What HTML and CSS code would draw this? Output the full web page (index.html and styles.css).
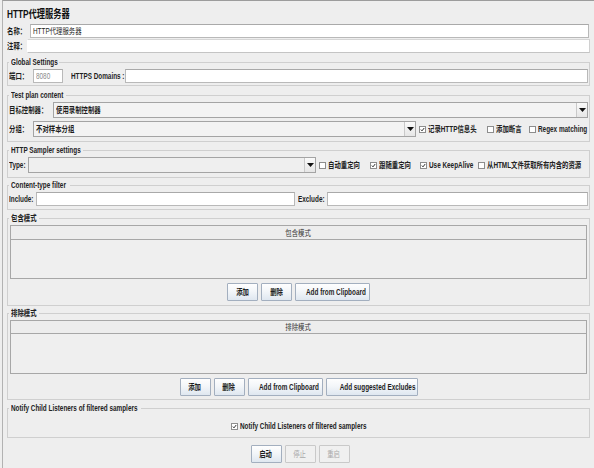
FILE: index.html
```html
<!DOCTYPE html>
<html lang="zh-CN">
<head>
<meta charset="utf-8">
<title>HTTP代理服务器</title>
<link rel="stylesheet" href="styles.css">
</head>
<body>
<div class="frame">
  <div class="title"><span class="t">HTTP代理服务器</span></div>

  <div class="row name-row">
    <span class="lbl lbl-name"><span class="t">名称：</span></span>
    <div class="input"><span class="val t">HTTP代理服务器</span></div>
  </div>
  <div class="row comment-row">
    <span class="lbl lbl-comment"><span class="t">注释：</span></span>
    <div class="input input-flat"></div>
  </div>

  <fieldset class="group g-global">
    <legend class="lg-global"><span class="t">Global Settings</span></legend>
    <div class="grid grid-global">
      <span class="lbl"><span class="t">端口：</span></span>
      <div class="input"><span class="val muted t">8080</span></div>
      <span class="lbl lbl-https"><span class="t">HTTPS Domains :</span></span>
      <div class="input"></div>
    </div>
  </fieldset>

  <fieldset class="group g-plan">
    <legend class="lg-plan"><span class="t">Test plan content</span></legend>
    <div class="grid grid-plan1">
      <span class="lbl"><span class="t">目标控制器：</span></span>
      <div class="combo"><span class="combo-text"><span class="t">使用录制控制器</span></span><span class="arrow"><svg width="7" height="4" viewBox="0 0 7 4"><polygon points="0,0 7,0 3.5,4" fill="#111"/></svg></span></div>
    </div>
    <div class="grid grid-plan2">
      <span class="lbl"><span class="t">分组：</span></span>
      <div class="combo"><span class="combo-text"><span class="t">不对样本分组</span></span><span class="arrow"><svg width="7" height="4" viewBox="0 0 7 4"><polygon points="0,0 7,0 3.5,4" fill="#111"/></svg></span></div>
      <label class="cb"><span class="box"><svg width="7" height="7" viewBox="0 0 7 7"><polyline points="1.2,3.6 2.8,5.4 5.9,1.4" fill="none" stroke="#222" stroke-width="1.3"/></svg></span><span class="t">记录HTTP信息头</span></label>
      <label class="cb"><span class="box"></span><span class="t">添加断言</span></label>
      <label class="cb"><span class="box"></span><span class="t">Regex matching</span></label>
    </div>
  </fieldset>

  <fieldset class="group g-sampler">
    <legend class="lg-sampler"><span class="t">HTTP Sampler settings</span></legend>
    <div class="grid grid-sampler">
      <span class="lbl"><span class="t">Type:</span></span>
      <div class="combo combo-empty"><span class="combo-text"></span><span class="arrow"><svg width="7" height="4" viewBox="0 0 7 4"><polygon points="0,0 7,0 3.5,4" fill="#111"/></svg></span></div>
      <label class="cb"><span class="box"></span><span class="t">自动重定向</span></label>
      <label class="cb"><span class="box"><svg width="7" height="7" viewBox="0 0 7 7"><polyline points="1.2,3.6 2.8,5.4 5.9,1.4" fill="none" stroke="#222" stroke-width="1.3"/></svg></span><span class="t">跟随重定向</span></label>
      <label class="cb"><span class="box"><svg width="7" height="7" viewBox="0 0 7 7"><polyline points="1.2,3.6 2.8,5.4 5.9,1.4" fill="none" stroke="#222" stroke-width="1.3"/></svg></span><span class="t">Use KeepAlive</span></label>
      <label class="cb"><span class="box"></span><span class="t">从HTML文件获取所有内含的资源</span></label>
    </div>
  </fieldset>

  <fieldset class="group g-filter">
    <legend class="lg-filter"><span class="t">Content-type filter</span></legend>
    <div class="grid grid-filter">
      <span class="lbl"><span class="t">Include:</span></span>
      <div class="input"></div>
      <span class="lbl lbl-exclude"><span class="t">Exclude:</span></span>
      <div class="input"></div>
    </div>
  </fieldset>

  <fieldset class="group g-include">
    <legend class="lg-pattern"><span class="t">包含模式</span></legend>
    <div class="table">
      <div class="thead thead-inc"><span class="t tc">包含模式</span></div>
      <div class="tbody tbody-inc"></div>
    </div>
    <div class="buttons">
      <button class="btn btn-s"><span class="t tc">添加</span></button>
      <button class="btn btn-s"><span class="t tc">删除</span></button>
      <button class="btn btn-m"><span class="t tc">Add from Clipboard</span></button>
    </div>
  </fieldset>

  <fieldset class="group g-exclude">
    <legend class="lg-pattern"><span class="t">排除模式</span></legend>
    <div class="table">
      <div class="thead thead-exc"><span class="t tc">排除模式</span></div>
      <div class="tbody tbody-exc"></div>
    </div>
    <div class="buttons">
      <button class="btn btn-s"><span class="t tc">添加</span></button>
      <button class="btn btn-s"><span class="t tc">删除</span></button>
      <button class="btn btn-m"><span class="t tc">Add from Clipboard</span></button>
      <button class="btn btn-l"><span class="t tc">Add suggested Excludes</span></button>
    </div>
  </fieldset>

  <fieldset class="group g-notify">
    <legend class="lg-notify"><span class="t">Notify Child Listeners of filtered samplers</span></legend>
    <div class="notify-row">
      <label class="cb"><span class="box"><svg width="7" height="7" viewBox="0 0 7 7"><polyline points="1.2,3.6 2.8,5.4 5.9,1.4" fill="none" stroke="#222" stroke-width="1.3"/></svg></span><span class="t notify-text">Notify Child Listeners of filtered samplers</span></label>
    </div>
  </fieldset>

  <div class="buttons bottom-buttons">
    <button class="btn btn-s"><span class="t tc">启动</span></button>
    <button class="btn btn-s" disabled><span class="t tc">停止</span></button>
    <button class="btn btn-s" disabled><span class="t tc">重启</span></button>
  </div>
</div>
</body>
</html>
```

FILE: styles.css
```css
* { box-sizing: border-box; }

html, body {
  margin: 0;
  padding: 0;
}

body {
  width: 594px;
  height: 468px;
  overflow: hidden;
  background: #eeeeee;
  color: #1e1e1e;
  font-family: "Liberation Sans", "Noto Sans CJK SC", sans-serif;
  font-size: 8.5px;
  font-weight: bold;
  line-height: 10px;
}

/* The UI font is a tall, narrow one: text runs are condensed horizontally */
.t {
  display: inline-block;
  white-space: nowrap;
  transform: scaleX(0.75);
  transform-origin: 0 50%;
}

.t.tc { transform-origin: 50% 50%; }

.frame {
  height: 468px;
  margin-left: 2px;
  border-top: 1px solid #9c9c9c;
  border-left: 1px solid #b2b2b2;
  padding: 0 4px 0 4px;
  display: flex;
  flex-direction: column;
}

.title {
  height: 23px;
  padding-top: 6px;
  line-height: 14px;
  font-size: 11px;
  color: #111;
  white-space: nowrap;
}

.row {
  display: flex;
  align-items: center;
  height: 14px;
}

.comment-row { margin-top: 1px; }

.lbl {
  white-space: nowrap;
  color: #1e1e1e;
}

.lbl-name { width: 23px; flex: none; }
.lbl-comment { width: 20px; flex: none; }

.input {
  flex: 1;
  height: 14px;
  background: #ffffff;
  border: 1px solid #b9b9b9;
  border-top-color: #a9a9a9;
  display: flex;
  align-items: center;
  min-width: 0;
  overflow: hidden;
}

.name-row .input { margin-right: 1px; }

.input-flat {
  border-left-color: #ffffff;
  border-top-color: #d6d6d6;
  border-right-color: #d0d0d0;
  border-bottom-color: #c4c4c4;
}

.val {
  margin-left: 2px;
  font-weight: normal;
  color: #222;
}

.val.muted { color: #8a8a8a; }

.group {
  margin: 0;
  padding: 0 1px;
  border: 1px solid #cfcfcf;
  min-width: 0;
}

.group legend {
  padding: 0 2px;
  margin-left: 0;
  height: 10px;
  line-height: 10px;
  color: #222;
  white-space: nowrap;
  overflow: visible;
}

.lg-global { width: 50px; }
.lg-plan { width: 57px; }
.lg-sampler { width: 74px; }
.lg-filter { width: 61px; }
.lg-pattern { width: 30px; }
.lg-notify { width: 132px; }

.g-global { margin-top: 4px; padding-top: 2px; padding-bottom: 2px; }
.g-plan { margin-top: 4px; padding-top: 2px; padding-bottom: 4px; }
.g-sampler { margin-top: 3px; padding-top: 2px; padding-bottom: 4px; }
.g-filter { margin-top: 2px; padding-top: 2px; padding-bottom: 3px; }
.g-include { margin-top: 3px; padding-top: 2px; padding-bottom: 4px; }
.g-exclude { margin-top: 2px; padding-top: 2px; padding-bottom: 3px; }
.g-notify { margin-top: 3px; padding-top: 6px; padding-bottom: 4px; }

.grid {
  display: grid;
  align-items: center;
}

.grid-global {
  height: 14px;
  grid-template-columns: 24px 30px 62px minmax(0, 1fr);
}
.lbl-https { padding-left: 8px; }

.grid-plan1 {
  height: 16px;
  grid-template-columns: 44px minmax(0, 1fr);
}

.grid-plan2 {
  height: 16px;
  margin-top: 3px;
  grid-template-columns: 24px 383px 68px 42px minmax(0, 1fr);
}

.grid-sampler {
  height: 16px;
  grid-template-columns: 19px 288px 51px 50px 58px minmax(0, 1fr);
}

.grid-filter {
  height: 14px;
  grid-template-columns: 27px 259px 32px minmax(0, 1fr);
}

.lbl-exclude { padding-left: 3px; }

.combo {
  height: 16px;
  display: flex;
  align-items: stretch;
  background: #f3f3f3;
  border: 1px solid #a4a4a4;
  min-width: 0;
}

.combo-empty { background: #efefef; }

.combo-text {
  flex: 1;
  padding-left: 2px;
  line-height: 14px;
  white-space: nowrap;
  overflow: hidden;
}

.arrow {
  flex: none;
  width: 11px;
  display: flex;
  align-items: center;
  justify-content: center;
  background: linear-gradient(#fafafa, #e6e6e6);
  border-left: 1px solid #c9c9c9;
}

.cb {
  display: flex;
  align-items: center;
  padding-left: 3px;
  white-space: nowrap;
  color: #222;
  min-width: 0;
}

.box {
  flex: none;
  width: 7px;
  height: 7px;
  margin-right: 2px;
  border: 1px solid #8d8d8d;
  background: #ffffff;
  display: flex;
  align-items: center;
  justify-content: center;
}

.box svg {
  display: block;
  width: 5px;
  height: 5px;
}

.table {
  margin: 0 1px;
  border: 1px solid #a7a7a7;
}

.thead {
  background: #ededed;
  border-bottom: 1px solid #a7a7a7;
  text-align: center;
  font-weight: normal;
  color: #333;
}

.thead-inc { height: 14px; line-height: 14px; }
.thead-exc { height: 13px; line-height: 13px; }

.tbody { background: #efefef; }
.tbody-inc { height: 38px; }
.tbody-exc { height: 39px; }

.buttons {
  display: flex;
  justify-content: center;
  gap: 3px;
  margin-top: 4px;
}

.bottom-buttons {
  margin-top: 7px;
  padding-left: 3px;
}

.btn {
  height: 18px;
  padding: 0;
  margin: 0;
  font: inherit;
  color: #1e1e1e;
  border: 1px solid #a3afbf;
  border-radius: 1px;
  background: linear-gradient(#fefefe 0%, #f3f6f9 45%, #dfe7f0 100%);
  white-space: nowrap;
  overflow: visible;
}

.btn-s { width: 31px; }
.btn-m { width: 75px; }
.btn-l { width: 92px; }

.btn:disabled {
  background: #f0f0f0;
  border-color: #c9c9c9;
  color: #a9a9a9;
  font-weight: normal;
}

.notify-row {
  height: 14px;
  display: flex;
  justify-content: center;
  align-items: center;
}

.notify-text { margin-right: -39px; }
```
